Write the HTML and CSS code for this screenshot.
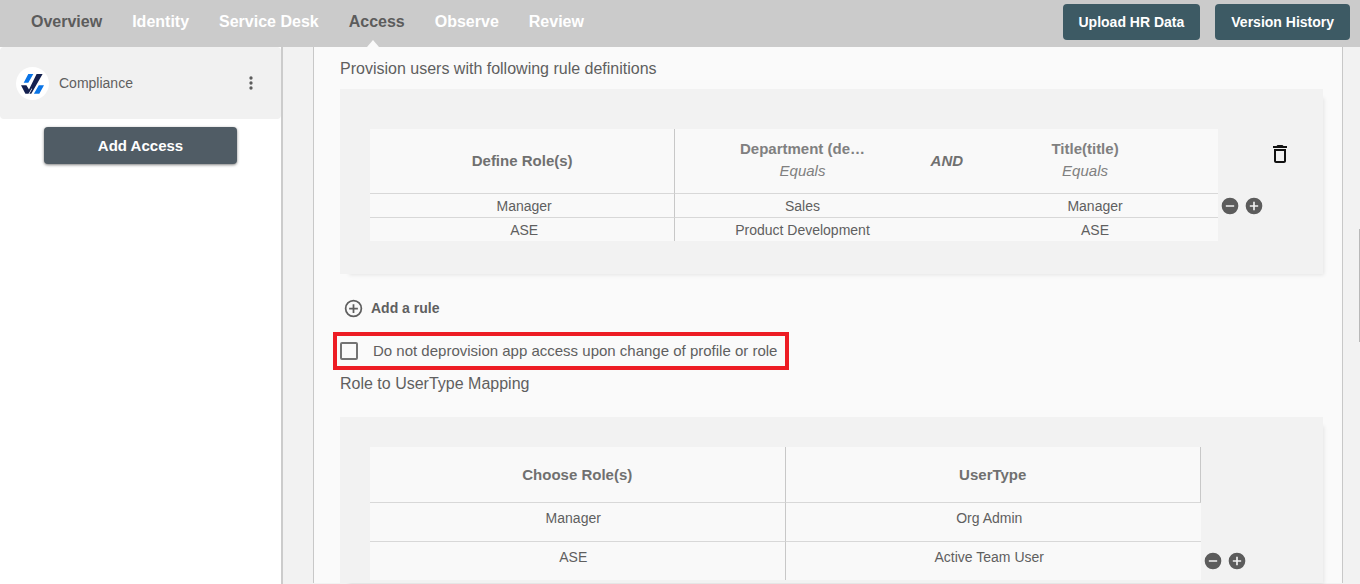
FILE: index.html
```html
<!DOCTYPE html>
<html lang="en">
<head>
<meta charset="utf-8">
<title>Access</title>
<link rel="stylesheet" href="styles.css">
</head>
<body>
<svg class="sprite" aria-hidden="true">
  <symbol id="minus" viewBox="0 0 24 24"><path d="M12 2a10 10 0 1 0 0 20 10 10 0 0 0 0-20zm5 11H7v-2h10z"/></symbol>
  <symbol id="plus" viewBox="0 0 24 24"><path d="M12 2a10 10 0 1 0 0 20 10 10 0 0 0 0-20zm5 11h-4v4h-2v-4H7v-2h4V7h2v4h4z"/></symbol>
</svg>
<header class="topbar">
  <nav class="tabs">
    <a class="tab dark" href="#">Overview</a>
    <a class="tab" href="#">Identity</a>
    <a class="tab" href="#">Service Desk</a>
    <a class="tab dark active" href="#">Access</a>
    <a class="tab" href="#">Observe</a>
    <a class="tab" href="#">Review</a>
  </nav>
  <div class="top-actions">
    <button class="top-button" type="button">Upload HR Data</button>
    <button class="top-button" type="button">Version History</button>
  </div>
</header>
<div class="layout">
  <aside class="sidebar">
    <div class="app">
      <svg class="logo" viewBox="0 0 33 33" aria-hidden="true">
        <circle cx="16.500" cy="16.500" r="16.500" fill="#fff"/>
        <path fill="#0a74e6" d="M12.300 7h5l-5 8.700H7.700zM22.800 18.300H28l-4.700 8.500h-5.400z"/>
        <path fill="#14204f" d="M20.600 7h6L15.300 26.700H9.400L5 18.300h5.400l2.600 4.300z"/>
        <path fill="#fff" d="M12.400 26.900l3.200-5.500.6.300-2.900 5.200z"/>
      </svg>
      <span class="app-name">Compliance</span>
      <button class="icon-button" type="button" aria-label="More options">
        <svg width="20" height="20" viewBox="0 0 24 24"><path d="M12 8a2 2 0 1 0 0-4 2 2 0 0 0 0 4zm0 2a2 2 0 1 0 0 4 2 2 0 0 0 0-4zm0 6a2 2 0 1 0 0 4 2 2 0 0 0 0-4z"/></svg>
      </button>
    </div>
    <button class="add-access" type="button">Add Access</button>
  </aside>
  <main class="main">
    <section class="card">
      <h2 class="title">Provision users with following rule definitions</h2>
      <div class="panel rules-panel">
        <div class="grid-wrap">
          <table class="grid rules">
            <colgroup><col class="c-role"><col class="c-dept"><col class="c-and"><col class="c-title"></colgroup>
            <thead>
              <tr>
                <th class="divided">Define Role(s)</th>
                <th class="attribute dept">Department (de…<em>Equals</em></th>
                <th class="and">AND</th>
                <th class="attribute job">Title(title)<em>Equals</em></th>
              </tr>
            </thead>
            <tbody>
              <tr><td class="divided">Manager</td><td>Sales</td><td></td><td>Manager</td></tr>
              <tr><td class="divided">ASE</td><td>Product Development</td><td></td><td>ASE</td></tr>
            </tbody>
          </table>
        </div>
        <div class="tools rule-tools">
          <button class="icon-button trash" type="button" aria-label="Delete rule">
            <svg width="24" height="24" viewBox="0 0 24 24"><path d="M6 19c0 1.100.9 2 2 2h8c1.100 0 2-.9 2-2V7H6zM8 9h8v10H8zM15.500 4l-1-1h-5l-1 1H5v2h14V4z"/></svg>
          </button>
          <div class="row-tools">
            <button class="icon-button" type="button" aria-label="Remove row"><svg width="20" height="20"><use href="#minus"/></svg></button>
            <button class="icon-button" type="button" aria-label="Add row"><svg width="20" height="20"><use href="#plus"/></svg></button>
          </div>
        </div>
      </div>
      <button class="add-rule" type="button">
        <svg width="21" height="21" viewBox="0 0 24 24"><path d="M13 7h-2v4H7v2h4v4h2v-4h4v-2h-4zM12 2a10 10 0 1 0 0 20 10 10 0 0 0 0-20zm0 18a8 8 0 1 1 0-16 8 8 0 0 1 0 16z"/></svg>
        Add a rule
      </button>
      <label class="option"><input class="check" type="checkbox">Do not deprovision app access upon change of profile or role</label>
      <h2 class="title mapping-title">Role to UserType Mapping</h2>
      <div class="panel mapping-panel">
        <div class="grid-wrap">
          <table class="grid mapping">
            <thead><tr><th class="divided">Choose Role(s)</th><th class="divided">UserType</th></tr></thead>
            <tbody>
              <tr><td class="divided">Manager</td><td>Org Admin</td></tr>
              <tr><td class="divided">ASE</td><td>Active Team User</td></tr>
            </tbody>
          </table>
        </div>
        <div class="tools mapping-tools">
          <div class="row-tools">
            <button class="icon-button" type="button" aria-label="Remove row"><svg width="20" height="20"><use href="#minus"/></svg></button>
            <button class="icon-button" type="button" aria-label="Add row"><svg width="20" height="20"><use href="#plus"/></svg></button>
          </div>
        </div>
      </div>
    </section>
    <span class="scroll-thumb"></span>
  </main>
</div>
</body>
</html>
```
FILE: styles.css
```css
* { box-sizing: border-box; }

body {
  margin: 0;
  min-height: 100vh;
  display: flex;
  flex-direction: column;
  background: #f2f2f2;
  color: #5f5f5f;
  font: 14px/20px "Liberation Sans", Arial, sans-serif;
}

button { font: inherit; cursor: pointer; }
svg { display: block; fill: currentColor; }
.sprite { display: none; }

.topbar {
  display: flex;
  justify-content: space-between;
  height: 47px;
  padding: 0 10px 0 31px;
  background: #cbcbcb;
}
.tabs { display: flex; gap: 30px; }
.tab {
  position: relative;
  padding-top: 12px;
  color: #fff;
  font-size: 16px;
  font-weight: bold;
  text-decoration: none;
}
.tab.dark { color: #5c5c5c; }
.tab.active::after {
  content: "";
  position: absolute;
  bottom: 0;
  left: 50%;
  margin-left: -10px;
  border: 6px solid transparent;
  border-top: 0;
  border-bottom: 7px solid #fafafa;
}
.top-actions { display: flex; gap: 15px; padding: 4px 0 7px; }
.top-button {
  padding: 0 16px;
  border: 0;
  border-radius: 4px;
  background: #3d5a64;
  color: #fff;
  font-size: 14px;
  font-weight: bold;
}

.layout { flex: 1; display: flex; }

.sidebar {
  width: 283px;
  flex: none;
  border-right: 2px solid #ccc;
  background: #fff;
}
.app {
  display: flex;
  align-items: center;
  height: 72px;
  padding: 0 20px 0 16px;
  border-radius: 4px;
  background: #f1f1f1;
}
.logo { width: 33px; height: 33px; margin-right: 10px; }
.app-name { flex: 1; }
.icon-button {
  padding: 0;
  border: 0;
  background: none;
  color: #5c5c5c;
}
.add-access {
  display: block;
  width: calc(100% - 88px);
  height: 37px;
  margin: 8px 44px;
  border: 0;
  border-radius: 4px;
  background: #505c65;
  box-shadow: 0 1px 3px rgba(0, 0, 0, 0.5);
  color: #fff;
  font-size: 15px;
  font-weight: bold;
}

.main { position: relative; flex: 1; padding: 0 17px 1px 30px; }
.card {
  padding: 10px 19px 0 26px;
  border: 1px solid #c8c8c8;
  border-width: 0 1px;
  background: #fafafa;
}
.title { margin: 0 0 8px; font-size: 16px; line-height: 24px; font-weight: normal; }
.panel {
  display: flex;
  background: #f2f2f2;
  box-shadow: 5px 5px 4px -4px rgba(0, 0, 0, 0.09);
}
.rules-panel { padding: 40px 0 33px 30px; }
.mapping-panel { padding: 30px 0 3px 30px; }

.grid-wrap { flex: 1; }
.grid {
  width: 100%;
  table-layout: fixed;
  border-collapse: separate;
  border-spacing: 0;
  background: #f9f9f9;
  text-align: center;
}
.grid th { padding: 0; color: #707070; font-size: 15px; border-bottom: 1px solid #d8d8d8; }
.grid td { padding: 0; }
.grid tr:not(:last-child) td { border-bottom: 1px solid #d8d8d8; }
.grid .divided { border-right: 1px solid #c8c8c8; }
.c-role { width: 36%; }
.c-dept { width: 30%; }
.c-and { width: 5%; }
.c-title { width: 29%; }
.rules th { height: 65px; }
.rules td { height: 24px; }
.rules tr:last-child td { height: 23px; }
.rules td.divided { padding-left: 4px; }
.attribute { padding-bottom: 2px; line-height: 22px; }
.grid .attribute { padding-bottom: 2px; color: #808080; }
.attribute em { display: block; font-weight: normal; }
.grid .job { padding-right: 20px; }
.grid .and { font-style: italic; padding-right: 8px; }
.mapping th { height: 56px; }
.mapping td { height: 39px; padding: 0 8px 8px 0; }
.mapping tr:last-child td { height: 38px; }

.tools { display: flex; flex-direction: column; }
.rule-tools { width: 105px; padding: 13px 0 0 2px; gap: 30px; }
.trash { width: 24px; margin-left: 48px; color: #111; }
.row-tools { display: flex; gap: 4px; }
.mapping-tools { width: 122px; justify-content: flex-end; padding: 0 0 9px 2px; }

.add-rule {
  display: flex;
  align-items: center;
  gap: 7px;
  height: 24px;
  margin: 22px 0 12px;
  padding: 0 3px;
  border: 0;
  background: none;
  color: #5f5f5f;
  font-weight: bold;
}
.option {
  display: flex;
  align-items: center;
  width: fit-content;
  height: 38px;
  margin: 0 0 2px -7px;
  padding: 0 8px 0 3px;
  border: 4px solid #ed1c24;
  font-size: 15px;
}
.check {
  appearance: none;
  width: 18px;
  height: 18px;
  margin: 0 15px 0 0;
  border: 2px solid #737373;
  border-radius: 2px;
}
.mapping-title { margin-bottom: 21px; }

.scroll-thumb {
  position: absolute;
  top: 182px;
  right: 0;
  width: 1px;
  height: 113px;
  background: #b8b8b8;
}
```
